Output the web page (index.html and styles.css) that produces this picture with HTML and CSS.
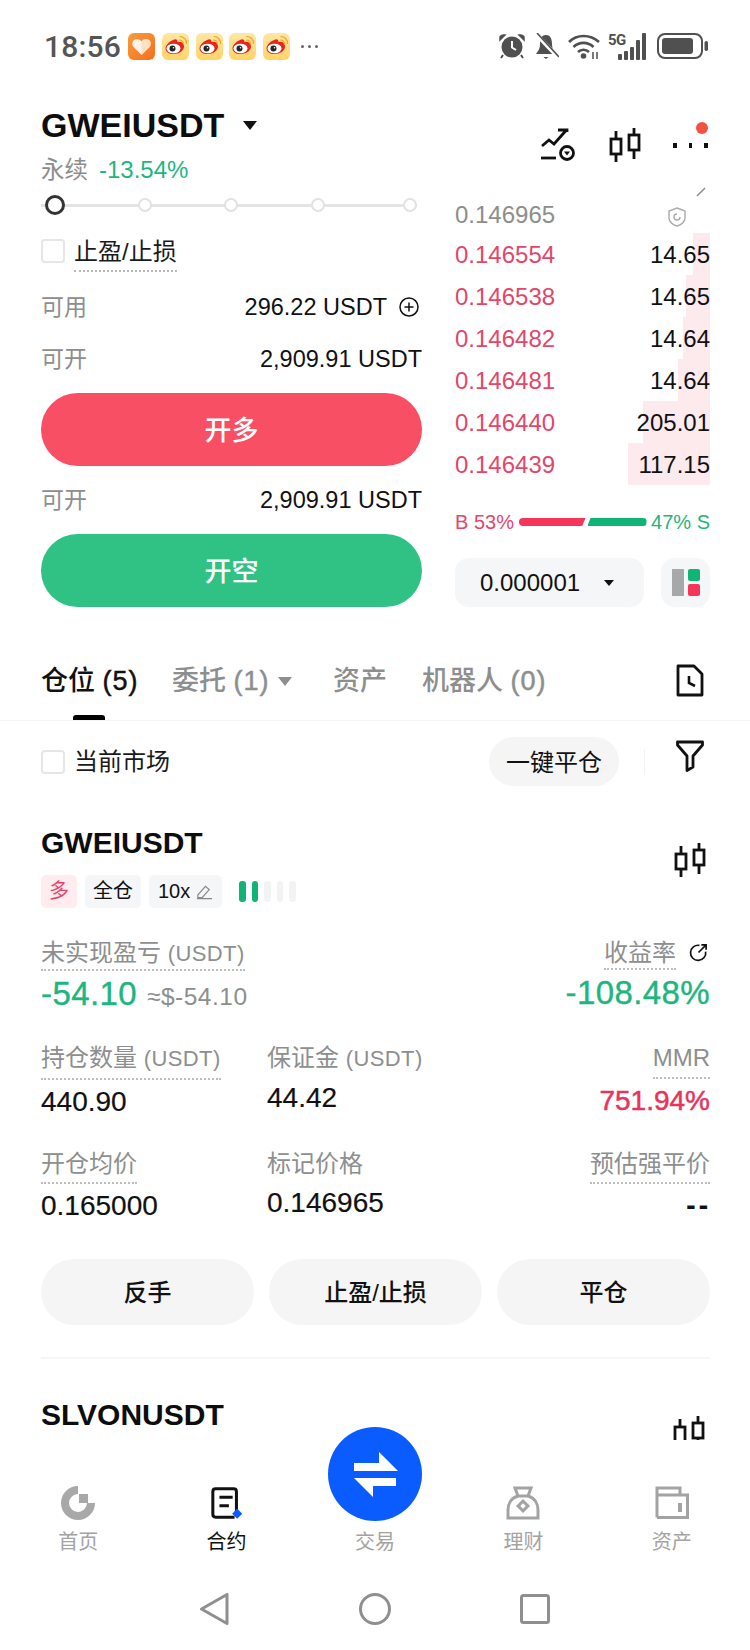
FILE: index.html
```html
<!DOCTYPE html>
<html lang="zh">
<head>
<meta charset="utf-8">
<title>GWEIUSDT</title>
<link rel="stylesheet" href="styles.css">
</head>
<body>
<div class="page">
  <div class="status">
    <span class="time">18:56</span>
    <svg class="app" viewBox="0 0 27 27"><defs><linearGradient id="hg" x1="0" y1="0" x2="1" y2="1"><stop offset="0" stop-color="#fb9a3c"/><stop offset="1" stop-color="#f4701e"/></linearGradient></defs><rect width="27" height="27" rx="6" fill="url(#hg)"/><path d="M13.500 22 L5.500 14 C2.800 10.500 5 6 9 6 C11 6 12.500 7 13.500 8.500 C14.500 7 16 6 18 6 C22 6 24.200 10.500 21.500 14Z" fill="#fff3e8"/><path d="M13.500 22 L13.500 8.500 C14.500 7 16 6 18 6 C22 6 24.200 10.500 21.500 14Z" fill="#fde0c8"/></svg>
    <svg class="app wb" viewBox="0 0 27 27"><use href="#weibo"/></svg>
    <svg class="app wb" viewBox="0 0 27 27"><use href="#weibo"/></svg>
    <svg class="app wb" viewBox="0 0 27 27"><use href="#weibo"/></svg>
    <svg class="app wb" viewBox="0 0 27 27"><use href="#weibo"/></svg>
    <span class="more-dots"><i></i><i></i><i></i></span>
    <span class="status-right">
      <svg class="si-alarm" viewBox="0 0 26 26" fill="#505050"><circle cx="13" cy="14" r="10.500"/><path d="M1 7 L6 2 Q2 1.500 1 4Z M25 7 L20 2 Q24 1.500 25 4Z" stroke="#505050" stroke-width="1.500"/><path d="M13 8 V14.500 L17 17" stroke="#fff" stroke-width="2" fill="none"/><path d="M4 22 L2 25 M22 22 L24 25" stroke="#505050" stroke-width="2"/></svg>
      <svg class="si-bell" viewBox="0 0 25 27" fill="#505050"><path d="M12 2 C7 2 6 7 6 11 C6 15 5 17 2 21 H22 C19 17 18 15 18 11 C18 7 17 2 12 2Z"/><path d="M9.500 24 H14.500 L12 26Z"/><path d="M2 1 L24 24" stroke="#fff" stroke-width="4"/><path d="M3 0 L25 24" stroke="#505050" stroke-width="1.600"/></svg>
      <svg class="si-wifi" viewBox="0 0 32 27" fill="none" stroke="#505050" stroke-width="2.600"><path d="M1 9 C9 1 22 1 31 9"/><path d="M5.500 14 C11 8.500 20 8.500 25.500 14"/><path d="M10 19 C13 16 18 16 21 19"/><circle cx="15.500" cy="23" r="2.800" fill="#505050" stroke="none"/><path d="M25 19 V26 M29 19 V26" stroke-width="1.500"/></svg>
      <span class="signal"><span class="five-g">5G</span><svg class="si-signal" viewBox="0 0 39 27" fill="#505050"><rect x="10" y="21" width="4" height="6" rx="1"/><rect x="16" y="18" width="4" height="9" rx="1"/><rect x="22" y="14" width="4" height="13" rx="1"/><rect x="28" y="7" width="4" height="20" rx="1"/><rect x="34" y="0" width="4" height="27" rx="1"/></svg></span>
      <svg class="si-batt" viewBox="0 0 51 26"><rect x="1" y="1" width="44" height="24" rx="7" fill="none" stroke="#505050" stroke-width="2"/><rect x="5" y="5" width="31" height="16" rx="3" fill="#505050"/><rect x="47.500" y="8" width="3.500" height="10" rx="1.700" fill="#505050"/></svg>
    </span>
  </div>

  <header class="head">
    <div class="head-left">
      <div class="pair"><h1 class="pair-name">GWEIUSDT</h1><span class="caret caret-lg"></span></div>
      <div class="sub"><span class="muted">永续</span><span class="green">-13.54%</span></div>
    </div>
    <div class="head-icons">
      <svg class="ic-alert" viewBox="0 0 36 34" fill="none" stroke="#111" stroke-width="2.800"><path d="M1 18 L8 12 L13 16 L25 2.500 M17 2 H26 V4"/><path d="M0 30 H15"/><circle cx="26" cy="25" r="6.500"/><path d="M23 23.500 H29 L26 27.500Z" fill="#111" stroke="none"/></svg>
      <svg class="ic-candle" viewBox="0 0 32 34" fill="none" stroke="#111" stroke-width="2.800"><rect x="2" y="11" width="10" height="15"/><path d="M7 3 V11 M7 26 V34"/><rect x="20" y="7" width="10" height="15"/><path d="M25 0 V7 M25 22 V31"/></svg>
      <div class="ic-more"><i></i><i></i><i></i><b></b></div>
    </div>
  </header>

  <section class="market">
    <div class="form">
      <div class="slider"><span class="knob knob-on"></span><span class="knob"></span><span class="knob"></span><span class="knob"></span><span class="knob knob-end"></span></div>
      <div class="check-row tp"><span class="box"></span><span class="dot-label">止盈/止损</span></div>
      <div class="kv kv-1"><span class="muted">可用</span><span class="val">296.22 USDT<svg class="ic-plus" viewBox="0 0 20 20" fill="none" stroke="#111" stroke-width="1.500"><circle cx="10" cy="10" r="9"/><path d="M5.500 10 H14.500 M10 5.500 V14.500"/></svg></span></div>
      <div class="kv kv-2"><span class="muted">可开</span><span class="val">2,909.91 USDT</span></div>
      <button class="trade long">开多</button>
      <div class="kv kv-3"><span class="muted">可开</span><span class="val">2,909.91 USDT</span></div>
      <button class="trade short">开空</button>
    </div>
    <div class="book">
      <div class="last">
        <span class="muted">0.146965</span>
        <svg class="ic-shield" viewBox="0 0 18 20" fill="none" stroke="#aaa" stroke-width="1.400"><path d="M9 1 L17 4 V11 C17 15 13 18 9 19 C5 18 1 15 1 11 V4Z"/><path d="M12 10 A3 3 0 1 1 9 7"/></svg>
        <svg class="ic-slash" viewBox="0 0 10 10"><path d="M1 9 L9 1" stroke="#888" stroke-width="1.500"/></svg>
      </div>
      <div class="row"><i class="depth" style="width:17px"></i><span class="red">0.146554</span><span class="size">14.65</span></div>
      <div class="row"><i class="depth" style="width:24px"></i><span class="red">0.146538</span><span class="size">14.65</span></div>
      <div class="row"><i class="depth" style="width:27px"></i><span class="red">0.146482</span><span class="size">14.64</span></div>
      <div class="row"><i class="depth" style="width:32px"></i><span class="red">0.146481</span><span class="size">14.64</span></div>
      <div class="row"><i class="depth" style="width:67px"></i><span class="red">0.146440</span><span class="size">205.01</span></div>
      <div class="row"><i class="depth" style="width:82px"></i><span class="red">0.146439</span><span class="size">117.15</span></div>
      <div class="ratio">
        <span class="red">B 53%</span>
        <span class="ratio-bar"><i class="rb-red"></i><i class="rb-green"></i></span>
        <span class="green">47% S</span>
      </div>
      <div class="book-tools">
        <div class="select"><span>0.000001</span><span class="caret caret-sm"></span></div>
        <div class="layout"><i class="lay-a"></i><i class="lay-b"></i><i class="lay-c"></i></div>
      </div>
    </div>
  </section>

  <nav class="tabs">
    <div class="tab tab-on">仓位 <small>(5)</small></div>
    <div class="tab tab-2">委托 <small>(1)</small><span class="caret caret-grey"></span></div>
    <div class="tab tab-3">资产</div>
    <div class="tab tab-4">机器人 <small>(0)</small></div>
    <svg class="ic-doc" viewBox="0 0 28 33" fill="none" stroke="#111" stroke-width="2.800"><path d="M2 2 H18 L26 10 V31 H2Z" stroke-linejoin="round"/><path d="M13 12 V19 L19 22" stroke-width="2.600"/></svg>
  </nav>

  <div class="filter">
    <div class="check-row"><span class="box box-plain"></span><span class="filter-text">当前市场</span></div>
    <button class="pill">一键平仓</button>
    <span class="vline"></span>
    <svg class="ic-filter" viewBox="0 0 28 32" fill="none" stroke="#111" stroke-width="2.800" stroke-linejoin="round"><path d="M1.500 2 H26.500 V5 L17 16 V27 L11 30.500 V16 L1.500 5Z"/></svg>
  </div>

  <article class="pos">
    <div class="pos-head"><h2 class="pos-name">GWEIUSDT</h2><svg class="ic-candle ic-candle-sm" viewBox="0 0 32 34" fill="none" stroke="#111" stroke-width="2.800"><rect x="2" y="11" width="10" height="15"/><path d="M7 3 V11 M7 26 V34"/><rect x="20" y="7" width="10" height="15"/><path d="M25 0 V7 M25 22 V31"/></svg></div>
    <div class="tags">
      <span class="tag tag-red">多</span>
      <span class="tag">全仓</span>
      <span class="tag tag-lev">10x<svg class="ic-edit" viewBox="0 0 18 16" fill="none" stroke="#888" stroke-width="1.300"><path d="M2 11 L10 2 L14 5.500 L6.500 14 H2Z M1 15 H17"/></svg></span>
      <span class="lev-bars"><i class="on"></i><i class="on"></i><i></i><i></i><i></i></span>
    </div>

    <div class="pnl-row">
      <div>
        <div class="label lab-a">未实现盈亏 <small>(USDT)</small></div>
        <div class="pnl"><span class="pnl-big">-54.10</span><span class="pnl-fiat">≈$-54.10</span></div>
      </div>
      <div class="right">
        <div class="pnl-label"><span class="label lab-a">收益率</span><svg class="ic-share" viewBox="0 0 20 20" fill="none" stroke="#111" stroke-width="1.800"><path d="M11 2.500 A8 8 0 1 0 17.500 9"/><path d="M10 10 L18 2 M13 2 H18 V7"/></svg></div>
        <div class="pnl-big">-108.48%</div>
      </div>
    </div>

    <div class="metrics metrics-2">
      <div><div class="label lab-b">持仓数量 <small>(USDT)</small></div><div class="mval mval-b">440.90</div></div>
      <div><div class="label">保证金 <small>(USDT)</small></div><div class="mval mval-p">44.42</div></div>
      <div class="right"><div class="label lab-b">MMR</div><div class="mval mval-b mmr">751.94%</div></div>
    </div>
    <div class="metrics metrics-3">
      <div><div class="label lab-c">开仓均价</div><div class="mval mval-c">0.165000</div></div>
      <div><div class="label">标记价格</div><div class="mval mval-q">0.146965</div></div>
      <div class="right"><div class="label lab-c">预估强平价</div><div class="mval mval-c dashes">--</div></div>
    </div>

    <div class="actions"><button class="act">反手</button><button class="act">止盈/止损</button><button class="act">平仓</button></div>
  </article>

  <div class="divider"></div>

  <article class="pos-next">
    <div class="pos-head"><h2 class="pos-name">SLVONUSDT</h2><svg class="ic-candle ic-candle-nx" viewBox="0 0 32 34" fill="none" stroke="#111" stroke-width="2.800"><rect x="2" y="11" width="10" height="15"/><path d="M7 3 V11 M7 26 V34"/><rect x="20" y="7" width="10" height="15"/><path d="M25 0 V7 M25 22 V31"/></svg></div>
  </article>

  <footer class="bottom">
    <div class="tabbar">
      <div class="nav-item"><svg class="nav-ic" viewBox="0 0 34 34"><path d="M17 4 A13 13 0 1 0 30 17" fill="none" stroke="#a8a8a8" stroke-width="8"/><rect x="18" y="8" width="9" height="9" fill="#a8a8a8"/></svg><span>首页</span></div>
      <div class="nav-item nav-on"><svg class="nav-ic" viewBox="0 0 36 34"><path d="M28 26 V5 Q28 2 25 2 H6 Q3 2 3 5 V29 Q3 32 6 32 H26" fill="none" stroke="#111" stroke-width="3.200"/><path d="M10 11 H24 M10 20 H20" stroke="#111" stroke-width="3.200"/><rect x="25" y="24.500" width="7.500" height="7.500" transform="rotate(45 28.750 28.250)" fill="#0a5cff"/></svg><span>合约</span></div>
      <div class="nav-item nav-main"><svg class="swap" viewBox="0 0 94 94"><circle cx="47" cy="47" r="47" fill="#0a5cff"/><path d="M26 36 H51 V25 L70 44 H26Z M26 51 H68 V59 H45 V70Z" fill="#fff"/></svg><span>交易</span></div>
      <div class="nav-item"><svg class="nav-ic" viewBox="0 0 34 34" fill="none" stroke="#a3a3a3" stroke-width="3"><path d="M9 2 H25 L22 10 H12Z"/><path d="M12 10 C5 12 2 18 2 24 V32 H32 V24 C32 18 29 12 22 10"/><rect x="13.500" y="16.500" width="7" height="7" transform="rotate(45 17 20)"/></svg><span>理财</span></div>
      <div class="nav-item"><svg class="nav-ic" viewBox="0 0 34 34" fill="none" stroke="#a3a3a3" stroke-width="3"><path d="M2 31.500 V2 H25 V9 M2 9 H32.500 V31.500 H2"/><path d="M25 17 V26" stroke-width="4"/></svg><span>资产</span></div>
    </div>
    <div class="syskeys">
      <svg class="key" viewBox="0 0 32 32" fill="none" stroke="#8f8f8f" stroke-width="3" stroke-linejoin="round"><path d="M2.500 16 L28 1.500 V30.500Z"/></svg>
      <svg class="key" viewBox="0 0 32 32" fill="none" stroke="#8f8f8f" stroke-width="3"><circle cx="16" cy="16" r="14.500"/></svg>
      <svg class="key" viewBox="0 0 32 32" fill="none" stroke="#8f8f8f" stroke-width="3" stroke-linejoin="round"><rect x="2.500" y="2.500" width="27" height="27" rx="2"/></svg>
    </div>
  </footer>

  <svg class="defs" aria-hidden="true"><defs>
    <linearGradient id="wbg" x1="0" y1="0" x2="0" y2="1"><stop offset="0" stop-color="#ffe7a6"/><stop offset="1" stop-color="#ffd466"/></linearGradient>
    <g id="weibo"><rect width="27" height="27" rx="6" fill="url(#wbg)"/><path d="M11 7 C14 5.500 15.500 6.500 15.500 9 C19 8 22 10 22 13.500 C22 18 17 21 11.500 21 C7 21 3.500 19 3.500 15.500 C3.500 12.500 7 8.500 11 7Z" fill="#e8241c"/><ellipse cx="11.500" cy="15.500" rx="7" ry="4.800" fill="#fff"/><circle cx="10.500" cy="15.500" r="3" fill="#222"/><circle cx="11.500" cy="14.700" r=".8" fill="#fff"/><path d="M17 7 C19.500 7 21.500 8.500 21.500 11.500 M17.500 3.500 C22 3.500 25 7 24.500 11" fill="none" stroke="#f5a623" stroke-width="1.200"/></g>
  </defs></svg>
</div>
</body>
</html>
```
FILE: styles.css
```css
* { box-sizing: border-box; margin: 0; padding: 0; }
html, body { background: #fff; }
body { width: 750px; height: 1650px; overflow: hidden; font-family: "Liberation Sans", "Noto Sans CJK SC", sans-serif; color: #111; }
i { display: block; }
button { border: 0; font-family: inherit; }
.page { position: relative; width: 750px; height: 1650px; overflow: hidden; background: #fff; }
.defs { width: 0; height: 0; position: absolute; }
.muted { color: #8d8d8d; }
.green { color: #1fb57f; }
.red { color: #e2476b; }
.right { text-align: right; display: flex; flex-direction: column; align-items: flex-end; }

/* status */
.status { height: 92px; padding: 0 42px 0 44px; display: flex; align-items: center; }
.time { font-family: Roboto, sans-serif; font-weight: 500; font-size: 30px; color: #555; letter-spacing: .2px; width: 84px; }
.app { width: 27px; height: 27px; display: block; }
.wb { margin-left: 6.800px; }
.more-dots { display: flex; gap: 4px; margin-left: 11px; }
.more-dots i { width: 3px; height: 3px; border-radius: 50%; background: #666; }
.status-right { margin-left: auto; display: flex; align-items: center; }
.si-alarm { width: 26px; height: 26px; }
.si-bell { width: 25px; height: 27px; margin-left: 9px; }
.si-wifi { width: 32px; height: 27px; margin-left: 9px; }
.signal { position: relative; display: block; width: 39px; height: 27px; margin-left: 8px; }
.si-signal { display: block; width: 39px; height: 27px; }
.five-g { position: absolute; left: 0; top: 0; font-family: Roboto, sans-serif; font-weight: 700; font-size: 15px; line-height: 15px; letter-spacing: -.6px; color: #505050; }
.si-batt { width: 51px; height: 26px; margin-left: 10px; }

/* header */
.head { height: 98px; padding: 13px 42px 0 41px; display: flex; justify-content: space-between; align-items: flex-start; }
.pair { display: flex; align-items: center; height: 40px; }
.pair-name { font-size: 34px; font-weight: 700; line-height: 40px; color: #0d0d0d; }
.caret { display: block; width: 0; height: 0; border-style: solid; border-color: #111 transparent transparent; }
.caret-lg { border-width: 9px 7px 0; margin-left: 19px; margin-top: 1px; }
.sub { margin-top: 10px; display: flex; gap: 11px; font-size: 24px; line-height: 30px; }
.sub .muted { font-size: 23.500px; }
.head-icons { display: flex; align-items: flex-start; margin-top: 23px; }
.ic-alert { width: 36px; height: 34px; display: block; }
.ic-candle { display: block; width: 32px; height: 34px; margin-left: 32px; }
.ic-more { position: relative; display: flex; gap: 12px; width: 35px; margin-left: 32px; padding-top: 15px; }
.ic-more i { width: 5px; height: 5px; background: #111; }
.ic-more b { position: absolute; right: 0; top: -6px; width: 12px; height: 12px; border-radius: 50%; background: #f25244; }

/* market */
.market { display: grid; grid-template-columns: 381px 255px; column-gap: 33px; padding: 0 0 0 41px; }
.slider { height: 30px; padding-left: 4px; width: 376px; display: flex; align-items: center; gap: 72.500px; background: linear-gradient(#e4e4e4, #e4e4e4) center / 100% 3px no-repeat; }
.knob { width: 14px; height: 14px; border-radius: 50%; background: #fff; border: 2px solid #e2e2e2; }
.knob-on { width: 20px; height: 20px; border: 3.500px solid #333; }
.knob-end { margin-left: auto; }
.check-row { display: flex; align-items: flex-start; gap: 9px; }
.tp { margin-top: 15px; }
.box { width: 24px; height: 24px; border: 2px solid #e6e6e6; border-radius: 4px; background: #fff; margin-top: 4px; }
.box-plain { margin-top: 0; }
.dot-label { font-size: 24px; line-height: 32px; padding-top: 1px; padding-bottom: 2px; border-bottom: 2px dotted #b9b9b9; color: #1a1a1a; }
.kv { display: flex; justify-content: space-between; align-items: center; line-height: 30px; font-size: 23.500px; }
.kv .muted { font-size: 23px; }
.kv-1 { margin-top: 20px; padding-right: 1px; }
.kv-2 { margin-top: 22px; }
.kv-3 { margin-top: 19px; }
.val { display: flex; align-items: center; color: #111; }
.ic-plus { width: 20px; height: 20px; margin-left: 12px; margin-right: 2px; }
.trade { display: block; width: 381px; height: 73px; border-radius: 37px; color: #fff; font-size: 27px; font-weight: 500; margin-top: 19px; padding-bottom: 3px; }
.long { background: #f84f65; }
.short { background: #30c285; }

/* book */
.book { font-size: 24px; }
.last { position: relative; height: 43px; padding-top: 10px; line-height: 30px; }
.ic-shield { position: absolute; left: 213px; top: 17px; width: 18px; height: 20px; }
.ic-slash { position: absolute; right: 4px; top: -3px; width: 10px; height: 10px; }
.row { position: relative; height: 42px; padding-top: 1px; display: flex; justify-content: space-between; align-items: center; }
.row span { position: relative; }
.size { color: #111; }
.depth { position: absolute; right: 0; top: 0; bottom: 0; background: #fdeaed; }
.ratio { margin-top: 22px; height: 30px; display: flex; align-items: center; justify-content: space-between; font-size: 20px; }
.ratio-bar { display: flex; gap: 2px; width: 128px; height: 8px; }
.rb-red { width: 67px; background: #f6355a; border-radius: 4px 0 0 4px; clip-path: polygon(0 0, 100% 0, 95% 100%, 0 100%); }
.rb-green { width: 59px; background: #10b474; border-radius: 0 4px 4px 0; clip-path: polygon(5% 0, 100% 0, 100% 100%, 0 100%); }
.book-tools { margin-top: 21px; display: flex; justify-content: space-between; height: 49px; }
.select { width: 189px; background: #f5f6f7; border-radius: 14px; display: flex; align-items: center; padding-left: 25px; font-size: 24px; }
.caret-sm { border-width: 6px 5px 0; margin-left: 24px; }
.layout { width: 49px; background: #f5f6f7; border-radius: 14px; display: grid; grid-template-columns: 12px 12px; grid-template-rows: 12px 12px; gap: 3px 4px; align-content: center; justify-content: center; }
.lay-a { grid-row: 1 / 3; background: #a6a8aa; }
.lay-b { background: #10b474; border-radius: 2px; }
.lay-c { background: #f6355a; border-radius: 2px; }

/* tabs */
.tabs { display: flex; align-items: flex-start; padding: 57px 46px 0 41px; height: 114px; border-bottom: 1px solid #f3f3f3; }
.tab { position: relative; height: 56px; font-size: 27px; line-height: 34px; color: #8d8f8f; white-space: nowrap; font-weight: 500; }
.tab small { font-size: 27px; font-weight: 400; letter-spacing: 1px; -webkit-text-stroke: .5px currentColor; }
.tab-on { color: #111; width: 131px; }
.tab-on::after { content: ""; position: absolute; left: 32px; bottom: 0; width: 32px; height: 5px; background: #000; border-radius: 3px 3px 0 0; }
.tab-2 { width: 161px; }
.caret-grey { display: inline-block; border-width: 9px 7px 0; border-top-color: #8d8f8f; margin: 0 0 0 8px; vertical-align: 4px; }
.tab-3 { width: 89px; }
.tab-4 { width: 254px; }
.ic-doc { width: 28px; height: 33px; margin-left: auto; }

/* filter */
.filter { display: flex; align-items: center; padding: 16px 46px 0 41px; height: 65px; }
.check-row .filter-text { font-size: 24px; line-height: 24px; color: #1a1a1a; }
.pill { margin-left: auto; width: 130px; height: 49px; border-radius: 25px; background: #f5f5f5; font-size: 24px; color: #111; padding-bottom: 2px; }
.vline { width: 1px; height: 26px; background: #f2f2f2; margin: 0 31px 0 25px; }
.ic-filter { width: 28px; height: 32px; margin-top: -11px; }

/* position */
.pos { padding: 39px 40px 0 41px; }
.pos-head { display: flex; justify-content: space-between; align-items: flex-start; height: 36px; }
.pos-name { font-size: 30px; line-height: 36px; font-weight: 700; color: #0d0d0d; }
.ic-candle-sm { margin: 18px 4px 0 0; }
.tags { display: flex; align-items: center; margin-top: 14px; height: 33px; }
.tag { height: 33px; padding: 0 8px; background: #f5f6f7; border-radius: 5px; font-size: 20px; line-height: 33px; margin-right: 8px; display: flex; align-items: center; }
.tag-red { background: #feecef; color: #e2476b; }
.tag-lev { padding: 0 9px; }
.ic-edit { width: 17px; height: 16px; margin-left: 6px; }
.lev-bars { display: flex; gap: 6px; margin-left: 9px; }
.lev-bars i { width: 6.500px; height: 21px; border-radius: 3px; background: #f2f3f4; }
.lev-bars .on { background: #10b474; }

.label { font-size: 24px; line-height: 30px; color: #8d8f8f; white-space: nowrap; }
.label small { font-size: 22px; letter-spacing: .4px; }
.lab-a, .lab-b, .lab-c { display: inline-block; border-bottom: 2px dotted #bdbdbd; }
.lab-b { padding-bottom: 4px; }
.lab-c { padding-bottom: 3px; }
.pnl-row { display: flex; justify-content: space-between; margin-top: 30px; }
.pnl { display: flex; align-items: baseline; margin-top: 5px; gap: 10px; }
.pnl-big { font-size: 33px; line-height: 36px; letter-spacing: .4px; color: #1fb57f; -webkit-text-stroke: .4px currentColor; }
.right .pnl-big { margin-top: 5px; }
.pnl-fiat { font-size: 24.500px; letter-spacing: .5px; color: #8d8f8f; }
.pnl-label { display: flex; align-items: flex-start; }
.ic-share { width: 19px; height: 19px; margin: 5px 2px 0 13px; }
.metrics { display: grid; grid-template-columns: 226px 1fr auto; margin-top: 31px; }
.metrics-3 { margin-top: 30px; }
.mval { font-size: 28px; line-height: 34px; color: #111; -webkit-text-stroke: .2px currentColor; }
.mval-b { margin-top: 5px; }
.mval-c { margin-top: 5px; }
.mval-p { margin-top: 7px; }
.mval-q { margin-top: 7px; }
.mmr { color: #e8345c; -webkit-text-stroke: .5px currentColor; }
.dashes { letter-spacing: 3px; margin-right: -1px; font-weight: 700; }
.actions { display: grid; grid-template-columns: repeat(3, 1fr); gap: 15px; margin-top: 36px; }
.act { height: 66px; border-radius: 33px; background: #f5f5f5; font-size: 24px; font-weight: 500; color: #111; padding-bottom: 3px; }
.divider { margin: 32px 40px 0 41px; height: 2px; background: #f6f6f6; }
.pos-next { padding: 38px 40px 0 41px; }
.ic-candle-nx { margin: 19px 5px 0 0; }

/* bottom */
.bottom { position: absolute; left: 0; right: 0; bottom: 0; height: 210px; background: #fff; }
.tabbar { height: 130px; padding: 0 4px; display: grid; grid-template-columns: repeat(5, 1fr); }
.nav-item { display: flex; flex-direction: column; align-items: center; padding-top: 46px; font-size: 20px; line-height: 26px; color: #a3a3a3; }
.nav-ic { display: block; width: 34px; height: 34px; margin-bottom: 9px; }
.nav-on { color: #111; }
.nav-main { padding-top: 0; }
.swap { display: block; width: 94px; height: 94px; margin-top: -13px; margin-bottom: 8px; }
.syskeys { display: flex; justify-content: center; gap: 128px; padding-top: 23px; }
.key { width: 32px; height: 32px; display: block; }
```
